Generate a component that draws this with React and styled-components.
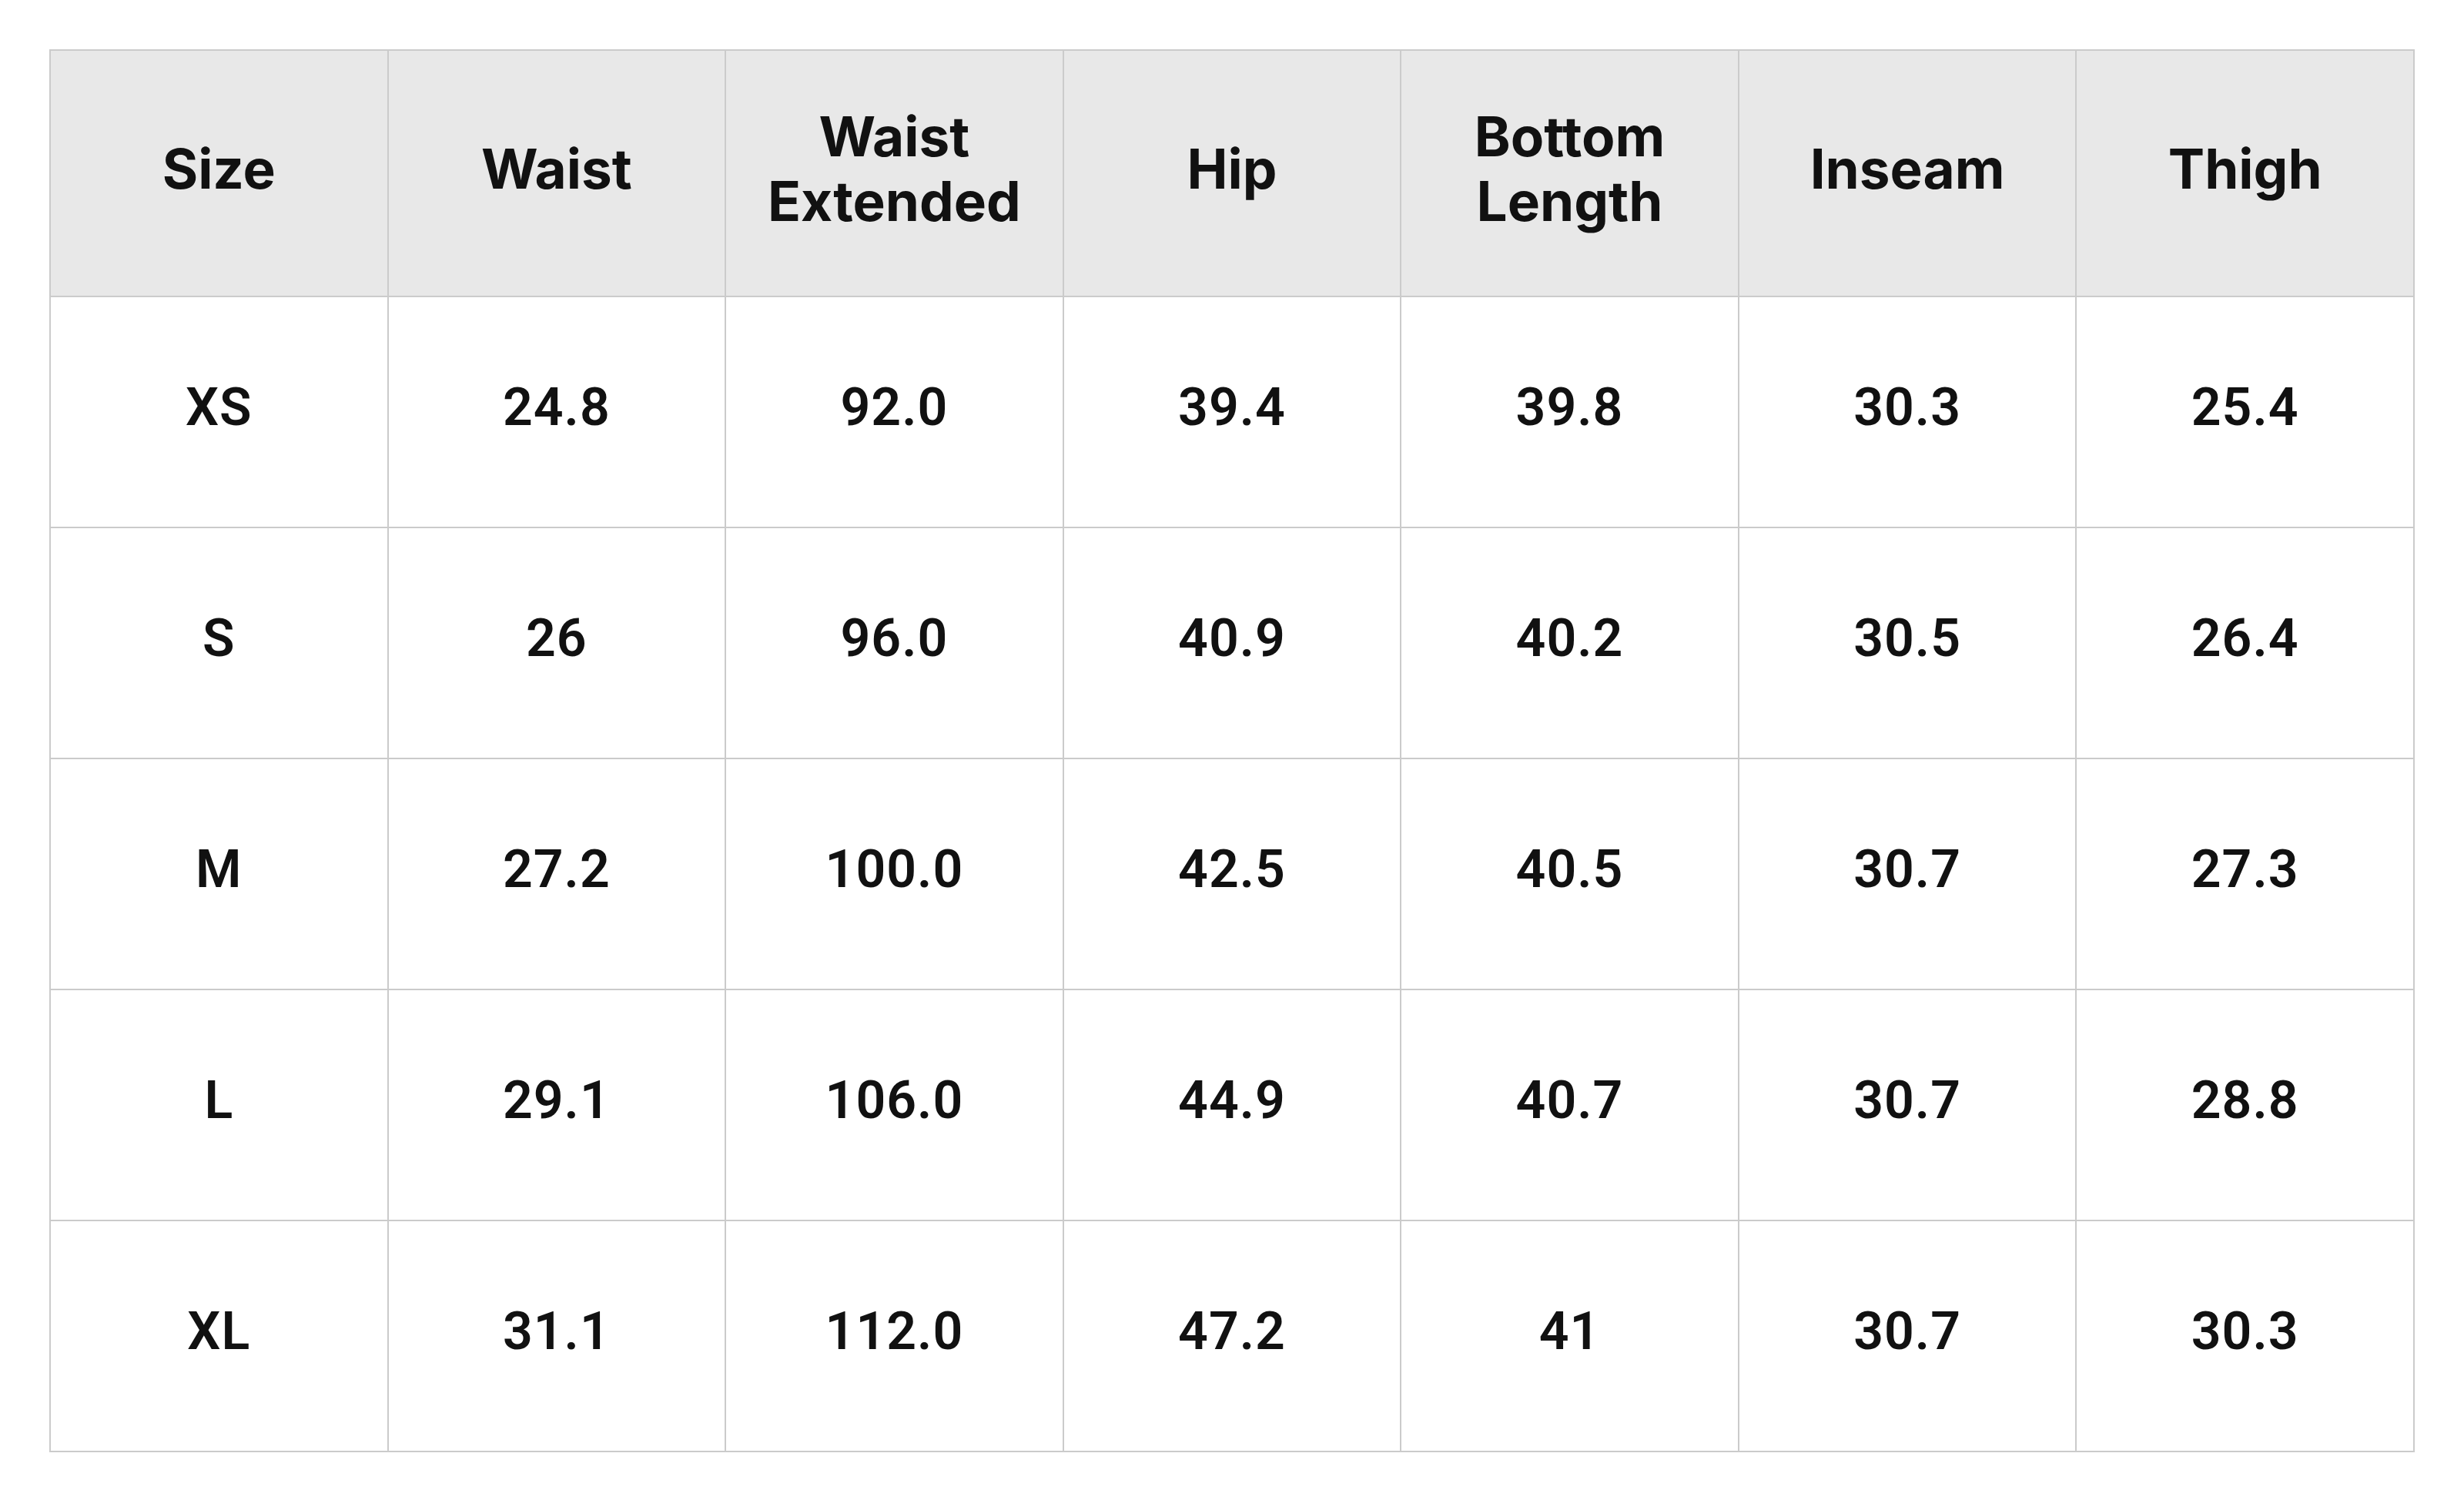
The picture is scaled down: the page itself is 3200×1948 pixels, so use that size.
import styled, { createGlobalStyle } from "styled-components";

const GlobalStyle = createGlobalStyle`
  html, body {
    margin: 0;
    padding: 0;
    background: #ffffff;
    font-family: Roboto, "Liberation Sans", Arial, sans-serif;
    color: #111111;
  }
`;

const Page = styled.div`
  padding: 64px;
`;

const Table = styled.table`
  width: 100%;
  border-collapse: collapse;
  table-layout: fixed;
  border: 2px solid #cbcbcb;
`;

const HeadCell = styled.th`
  height: 306px;
  padding: 0 16px 12px;
  background: #e8e8e8;
  border: 2px solid #cbcbcb;
  font-family: Inter, Roboto, sans-serif;
  font-size: 71px;
  font-weight: 700;
  line-height: 84px;
  text-align: center;
  vertical-align: middle;
`;

const Cell = styled.td`
  height: 286px;
  padding: 0 16px 12px;
  border: 2px solid #cbcbcb;
  font-size: 68px;
  font-weight: 600;
  letter-spacing: 1px;
  line-height: 1;
  text-align: center;
  vertical-align: middle;
`;

const columns = [
  ["Size"],
  ["Waist"],
  ["Waist", "Extended"],
  ["Hip"],
  ["Bottom", "Length"],
  ["Inseam"],
  ["Thigh"],
];

const rows = [
  ["XS", "24.8", "92.0", "39.4", "39.8", "30.3", "25.4"],
  ["S", "26", "96.0", "40.9", "40.2", "30.5", "26.4"],
  ["M", "27.2", "100.0", "42.5", "40.5", "30.7", "27.3"],
  ["L", "29.1", "106.0", "44.9", "40.7", "30.7", "28.8"],
  ["XL", "31.1", "112.0", "47.2", "41", "30.7", "30.3"],
];

export default function App() {
  return (
    <>
      <GlobalStyle />
      <Page>
        <Table>
          <thead>
            <tr>
              {columns.map((lines, i) => (
                <HeadCell key={i}>
                  {lines.map((l, j) => (
                    <div key={j}>{l}</div>
                  ))}
                </HeadCell>
              ))}
            </tr>
          </thead>
          <tbody>
            {rows.map((row) => (
              <tr key={row[0]}>
                {row.map((v, i) => (
                  <Cell key={i}>{v}</Cell>
                ))}
              </tr>
            ))}
          </tbody>
        </Table>
      </Page>
    </>
  );
}
